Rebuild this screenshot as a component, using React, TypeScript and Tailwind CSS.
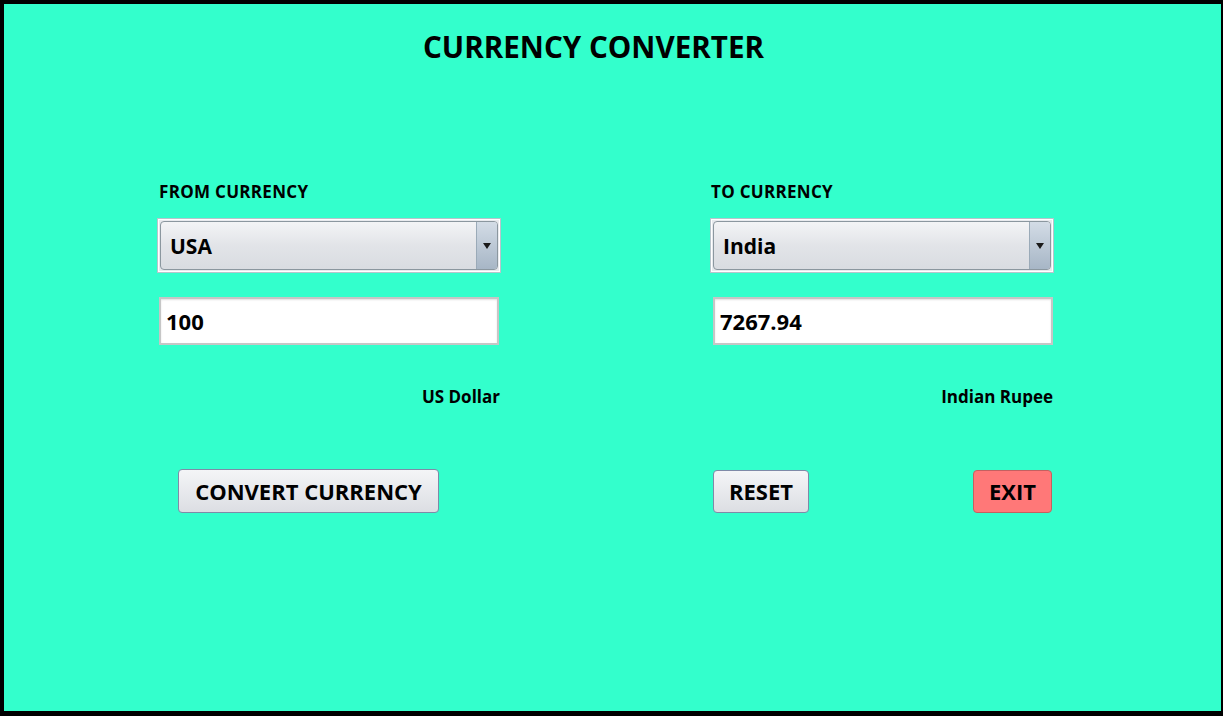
import { useState } from 'react';

const font = "font-['Open_Sans','Noto_Sans',sans-serif]";

function Combo({ value }: { value: string }) {
  return (
    <div className="h-[53px] w-[342px] border border-white bg-[#e8eaee] p-[1px] shadow-[0_0_0_1px_#b8c4cc]">
      <div className="flex h-full rounded-[4px] border border-[#8b979f] bg-gradient-to-b from-[#f3f4f6] via-[#e2e4e8] to-[#d9dce1] overflow-hidden">
        <div className="flex flex-1 items-center pl-[9px] pt-[3px] text-[21px] font-bold text-black">{value}</div>
        <div className="flex w-[21px] items-center justify-center border-l border-[#9aaab8] bg-gradient-to-b from-[#d3dce6] to-[#a7b6c6]">
          <svg width="8" height="6" viewBox="0 0 8 6">
            <path d="M0 0h8L4 6z" fill="#1a1a1a" />
          </svg>
        </div>
      </div>
    </div>
  );
}

function Field({ value }: { value: string }) {
  return (
    <div className="flex h-[48px] w-[340px] items-center border-2 border-[#c6c6c6] bg-white pl-[5px] text-[22px] font-bold text-black shadow-[inset_0_1px_2px_#e0e0e0]">
      {value}
    </div>
  );
}

function Btn({ label, red, className }: { label: string; red?: boolean; className?: string }) {
  return (
    <button
      className={`flex h-[43px] items-center justify-center rounded-[4px] border text-[22px] font-bold text-black ${
        red
          ? 'border-[#c46060] bg-[#ff7878]'
          : 'border-[#7f8aa8] bg-gradient-to-b from-[#f4f5f7] to-[#dcdee3]'
      } ${className ?? ''}`}
    >
      {label}
    </button>
  );
}

export default function App() {
  const [from] = useState('USA');
  const [to] = useState('India');

  return (
    <div className={`h-[716px] w-[1223px] border-t-4 border-l-4 border-r-2 border-b-[5px] border-black bg-[#33ffcc] ${font}`}>
      {/* Title */}
      <h1 className="pt-[23px] pl-[419px] text-[29.6px] font-bold leading-[40px] text-black">
        CURRENCY CONVERTER
      </h1>

      <div className="mt-[115px] flex gap-[211px] pl-[154px]">
        {/* From */}
        <div className="flex w-[342px] flex-col">
          <div className="pl-[1px] text-[17px] font-bold leading-[20px] tracking-[0.3px] text-black">FROM CURRENCY</div>
          <div className="mt-[17px]"><Combo value={from} /></div>
          <div className="mt-[25px] pl-[1px]"><Field value="100" /></div>
          <div className="mt-[41px] text-right text-[17px] font-bold leading-[22px] text-black">US Dollar</div>
          <div className="mt-[61px] pl-[20px]"><Btn label="CONVERT CURRENCY" className="w-[261px] h-[44px]" /></div>
        </div>

        {/* To */}
        <div className="flex w-[342px] flex-col">
          <div className="text-[17px] font-bold leading-[20px] tracking-[0.3px] text-black">TO CURRENCY</div>
          <div className="mt-[17px]"><Combo value={to} /></div>
          <div className="mt-[25px] pl-[2px]"><Field value="7267.94" /></div>
          <div className="mt-[41px] text-right text-[17px] font-bold leading-[22px] text-black">Indian Rupee</div>
          <div className="mt-[62px] flex justify-between pl-[2px] pr-[1px]">
            <Btn label="RESET" className="w-[96px]" />
            <Btn label="EXIT" red className="w-[79px]" />
          </div>
        </div>
      </div>
    </div>
  );
}
